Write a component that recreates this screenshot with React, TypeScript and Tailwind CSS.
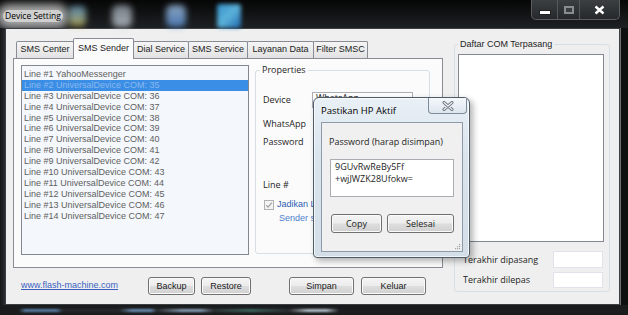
import React from "react";

const lines = [
  "Line #1 YahooMessenger",
  ...Array.from({ length: 13 }, (_, i) => `Line #${i + 2} UniversalDevice COM: ${35 + i}`),
];

const tabs = [
  { label: "SMS Center", w: "w-[58px]" },
  { label: "SMS Sender", w: "w-[61px]", active: true },
  { label: "Dial Service", w: "w-[56px]" },
  { label: "SMS Service", w: "w-[60px]" },
  { label: "Layanan Data", w: "w-[67px]" },
  { label: "Filter SMSC", w: "w-[55px]" },
];

function Button({ label, className }: { label: string; className: string }) {
  return (
    <div
      className={`flex items-center justify-center rounded-[3px] border border-[#707070] bg-[linear-gradient(#f4f4f4_0%,#ececec_48%,#dedede_52%,#d0d0d0_100%)] shadow-[inset_0_0_0_1px_#fbfbfb] leading-none text-[#1a1a1a] ${className}`}
    >
      {label}
    </div>
  );
}

export default function App() {
  return (
    <div className="relative flex h-[315px] w-[628px] flex-col overflow-hidden bg-[#1d1f21] font-['Liberation_Sans',Arial,sans-serif]">
      {/* title bar (glass) */}
      <div className="flex h-[28px] items-start bg-[linear-gradient(#060606,#141617_60%,#1e2124)]">
        <div className="ml-[3px] mt-[10px] rounded-full bg-[#cfcfcf] px-[2px] font-['Open_Sans',sans-serif] text-[8.5px] leading-[12px] text-black shadow-[0_0_9px_6px_rgba(195,195,195,0.85)]">
          Device Setting
        </div>
        <div className="ml-[6px] mt-[6px] h-[20px] w-[17px] rounded-[5px] bg-[linear-gradient(#6d9fc4,#9fb7a0_60%,#c9b44a)] opacity-80 blur-[3px]" />
        <div className="ml-[26px] mt-[5px] h-[22px] w-[20px] rounded-[6px] bg-[linear-gradient(#8e98a3,#c8d0d8)] opacity-80 blur-[3px]" />
        <div className="ml-[34px] mt-[5px] h-[22px] w-[20px] rounded-[6px] bg-[linear-gradient(#a5c7ea,#5b8fd6)] opacity-80 blur-[3px]" />
        <div className="ml-[31px] mt-[4px] h-[24px] w-[24px] rounded-[3px] bg-[linear-gradient(135deg,#3a9fe0,#63c3ef_50%,#1f6fbf)] opacity-90 blur-[2px]" />
        <div className="ml-auto mr-[8px] flex h-[20px] overflow-hidden rounded-b-[5px] border border-t-0 border-[#5a5d60] bg-[linear-gradient(#3c3f42,#26292b)]">
          <div className="flex w-[26px] items-center justify-center border-r border-[#55585b]">
            <div className="mt-[5px] h-[3px] w-[10px] bg-white shadow-[0_0_0_1px_#222]" />
          </div>
          <div className="flex w-[22px] items-center justify-center border-r border-[#55585b]">
            <div className="h-[8px] w-[10px] border-[2px] border-[#8a8d90] bg-[#3a3d40]" />
          </div>
          <div className="flex w-[39px] items-center justify-center">
            <svg width="11" height="10" viewBox="0 0 11 10">
              <path d="M1.5 1.5 L9.5 8.5 M9.5 1.5 L1.5 8.5" stroke="#fff" strokeWidth="2.4" />
            </svg>
          </div>
        </div>
      </div>

      {/* body */}
      <div className="flex h-[277px]">
        <div className="w-[5px] bg-[linear-gradient(90deg,#141516,#2a2d30)]" />
        <div className="flex w-[615px] border border-[#3c3f42] bg-[#efefef]">
          {/* left column */}
          <div className="flex w-[437px] flex-col pl-[7px] pt-[9px]">
            <div className="flex h-[20px] items-end pl-[4px] text-[9px] text-[#1b1b1b]">
              {tabs.map((t) =>
                t.active ? (
                  <div
                    key={t.label}
                    className={`relative z-10 -mb-px -ml-px flex h-[21px] items-center justify-center rounded-t-[2px] border border-b-0 border-[#898c95] bg-[#fbfbfb] ${t.w}`}
                  >
                    {t.label}
                  </div>
                ) : (
                  <div
                    key={t.label}
                    className={`-ml-px flex h-[17px] items-center justify-center rounded-t-[2px] border border-b-0 border-[#898c95] bg-[linear-gradient(#f5f5f5,#e2e2e2)] ${t.w}`}
                  >
                    {t.label}
                  </div>
                )
              )}
            </div>

            <div className="flex h-[210px] w-[430px] items-start border border-[#898c95] bg-[#fbfbfb]">
              {/* line list */}
              <div className="ml-[7px] mt-[6px] h-[190px] w-[228px] border border-[#828790] bg-[#f4f7fc] pt-[3px] text-[9px] text-[#5f5f5f]">
                {lines.map((l, i) => (
                  <div
                    key={l}
                    className={`h-[10.9px] whitespace-nowrap pl-[2px] leading-[10.9px] ${i === 1 ? "bg-[#3a8ee6] text-[#8ab8ee]" : ""}`}
                  >
                    {l}
                  </div>
                ))}
              </div>

              {/* properties */}
              <fieldset className="ml-[6px] mt-[5px] flex h-[190px] w-[175px] flex-col rounded-[3px] border border-[#d5dfe5] font-['Open_Sans',sans-serif] text-[9px] text-[#1e1e1e]">
                <legend className="ml-[4px] px-[2px] leading-[12px]">Properties</legend>
                <div className="ml-[7px] mt-[16px] flex h-[16px] items-center">
                  <span className="w-[49px]">Device</span>
                  <div className="h-[16px] w-[101px] border border-[#abadb3] bg-white pl-[3px] leading-[10px]">WhatsApp</div>
                </div>
                <div className="ml-[7px] mt-[8px] flex h-[16px] items-center">WhatsApp</div>
                <div className="ml-[7px] mt-[2px] flex h-[16px] items-center">Password</div>
                <div className="ml-[7px] mt-[27px] flex h-[16px] items-center">Line #</div>
                <div className="ml-[8px] mt-[6px] flex h-[12px] items-center gap-[3px] font-['Liberation_Sans',sans-serif] text-[#2f5fb3]">
                  <div className="flex h-[10px] w-[10px] items-center justify-center border border-[#b1b1b1] bg-[#f4f4f4]">
                    <svg width="8" height="8" viewBox="0 0 8 8">
                      <path d="M1.3 4.2 L3.2 6.1 L6.8 1.6" stroke="#a3a3a3" strokeWidth="1.3" fill="none" />
                    </svg>
                  </div>
                  <span className="whitespace-nowrap">Jadikan Line ini default</span>
                </div>
                <div className="ml-[23px] mt-[1px] h-[12px] whitespace-nowrap font-['Liberation_Sans',sans-serif] leading-[12px] text-[#4f7fd0]">
                  Sender sekarang
                </div>
              </fieldset>
            </div>

            <div className="mt-[9px] flex h-[18px] items-center text-[9px]">
              <span className="ml-[8px] w-[102px] whitespace-nowrap text-[#3a5fbf] underline">www.flash-machine.com</span>
              <Button label="Backup" className="ml-[25px] h-[18px] w-[47px]" />
              <Button label="Restore" className="ml-[6px] h-[18px] w-[50px]" />
              <Button label="Simpan" className="ml-[38px] h-[18px] w-[65px]" />
              <Button label="Keluar" className="ml-[7px] h-[18px] w-[65px]" />
            </div>
          </div>

          {/* right column */}
          <fieldset className="ml-[11px] mt-[9px] flex h-[254px] w-[156px] flex-col rounded-[3px] border border-[#d5dfe5] text-[9px] text-[#1e1e1e]">
            <legend className="ml-[3px] px-[2px] leading-[12px]">Daftar COM Terpasang</legend>
            <div className="ml-[3px] mt-[4px] h-[188px] w-[146px] border border-[#828790] bg-white" />
            <div className="mt-[9px] flex h-[17px] items-center pl-[8px] pr-[6px] font-['Open_Sans',sans-serif]">
              <span>Terakhir dipasang</span>
              <div className="ml-auto h-[17px] w-[50px] border border-[#e2e3ea] bg-white" />
            </div>
            <div className="mt-[4px] flex h-[16px] items-center pl-[8px] pr-[6px] font-['Open_Sans',sans-serif]">
              <span>Terakhir dilepas</span>
              <div className="ml-auto h-[16px] w-[50px] border border-[#e2e3ea] bg-white" />
            </div>
          </fieldset>
        </div>
        <div className="w-[8px] border-l border-[#6d7073] bg-[#0e0f10]" />
      </div>

      {/* bottom frame */}
      <div className="h-[10px] bg-[#1a1b1c] pt-[4px]">
        <div className="h-[3px] bg-[linear-gradient(90deg,#1a1b1c_0%,#1a1b1c_3%,#5a7fa8_4%,#5a7fa8_9%,#26292c_10%,#26292c_19%,#6d8fb7_21%,#6d8fb7_24%,#2a2d30_25%,#8aa0b8_29%,#8aa0b8_32%,#2e3336_34%,#3f6b60_40%,#2b2e30_46%,#b8c5d2_49%,#b8c5d2_52%,#1c1d1e_54%,#1c1d1e_100%)] blur-[1px]" />
      </div>

      {/* dialog window on top */}
      <div className="absolute left-[313px] top-[97px] flex h-[161px] w-[157px] flex-col rounded-b-[4px] rounded-t-[6px] border border-[#4f5b66] bg-[linear-gradient(#e9f0f6,#d8e3ec_40%,#d3dee8)] shadow-[3px_3px_6px_rgba(0,0,0,0.3),inset_0_0_0_1px_rgba(255,255,255,0.7)]">
        <div className="flex h-[24px] items-start">
          <span className="ml-[7px] mt-[7px] font-['Open_Sans',sans-serif] text-[9.5px] leading-[12px] text-black">Pastikan HP Aktif</span>
          <div className="ml-auto mr-[2px] flex h-[16px] w-[39px] items-center justify-center rounded-b-[4px] border border-t-0 border-[#7d8c9b] bg-[linear-gradient(#f5f8fb,#dde6ee)]">
            <svg width="12" height="10" viewBox="0 0 12 10">
              <path d="M2 1.5 L10 8.5 M10 1.5 L2 8.5" stroke="#6f7780" strokeWidth="3" strokeLinecap="round" />
              <path d="M2 1.5 L10 8.5 M10 1.5 L2 8.5" stroke="#f4f6f8" strokeWidth="1.1" strokeLinecap="round" />
            </svg>
          </div>
        </div>
        <div className="ml-[7px] mr-[6px] flex h-[130px] flex-col border border-[#8d9aa7] bg-[#f0f0f0] font-['Open_Sans',sans-serif] text-[9px] text-[#1e1e1e]">
          <div className="ml-[7px] mt-[13px] leading-[12px]">Password (harap disimpan)</div>
          <div className="ml-[8px] mt-[11px] h-[38px] w-[124px] border border-[#abadb3] bg-white pl-[4px] pt-[1px] leading-[12px]">
            <div>9GUvRwReBy5Ff</div>
            <div>+wjJWZK28Ufokw=</div>
          </div>
          <div className="mt-[17px] flex">
            <Button label="Copy" className="ml-[9px] h-[19px] w-[51px]" />
            <Button label="Selesai" className="ml-[5px] h-[19px] w-[67px]" />
          </div>
          <svg className="mb-[1px] ml-auto mr-[1px] mt-auto" width="7" height="7" viewBox="0 0 7 7">
            <rect x="5" y="1" width="1.2" height="1.2" fill="#a0a8b0" />
            <rect x="3" y="3" width="1.2" height="1.2" fill="#a0a8b0" />
            <rect x="5" y="3" width="1.2" height="1.2" fill="#a0a8b0" />
            <rect x="1" y="5" width="1.2" height="1.2" fill="#a0a8b0" />
            <rect x="3" y="5" width="1.2" height="1.2" fill="#a0a8b0" />
            <rect x="5" y="5" width="1.2" height="1.2" fill="#a0a8b0" />
          </svg>
        </div>
      </div>
    </div>
  );
}
